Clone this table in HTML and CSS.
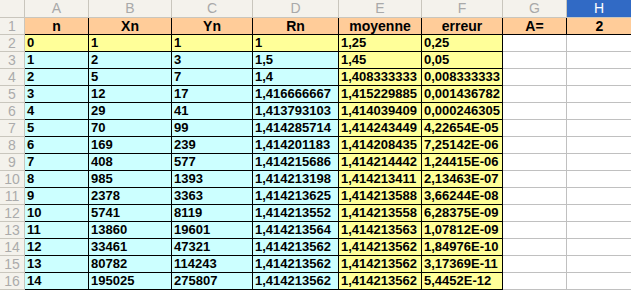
FILE: index.html
```html
<!DOCTYPE html>
<html>
<head>
<meta charset="utf-8">
<link rel="stylesheet" href="styles.css">
</head>
<body>
<div class="sheet">
  <div class="ch corner"></div>
  <div class="ch">A</div><div class="ch">B</div><div class="ch">C</div><div class="ch">D</div>
  <div class="ch">E</div><div class="ch">F</div><div class="ch">G</div><div class="ch sel">H</div>

  <div class="rh">1</div>
  <div class="c hd">n</div><div class="c hd">Xn</div><div class="c hd">Yn</div><div class="c hd">Rn</div>
  <div class="c hd">moyenne</div><div class="c hd">erreur</div><div class="c hd">A=</div><div class="c hd last">2</div>

  <div class="rh">2</div>
  <div class="c y">0</div><div class="c y">1</div><div class="c y">1</div><div class="c y">1</div>
  <div class="c y">1,25</div><div class="c y">0,25</div><div class="c w"></div><div class="c w"></div>

  <div class="rh">3</div>
  <div class="c b">1</div><div class="c b">2</div><div class="c b">3</div><div class="c b">1,5</div>
  <div class="c y">1,45</div><div class="c y">0,05</div><div class="c w"></div><div class="c w"></div>

  <div class="rh">4</div>
  <div class="c b">2</div><div class="c b">5</div><div class="c b">7</div><div class="c b">1,4</div>
  <div class="c y">1,408333333</div><div class="c y">0,008333333</div><div class="c w"></div><div class="c w"></div>

  <div class="rh">5</div>
  <div class="c b">3</div><div class="c b">12</div><div class="c b">17</div><div class="c b">1,416666667</div>
  <div class="c y">1,415229885</div><div class="c y">0,001436782</div><div class="c w"></div><div class="c w"></div>

  <div class="rh">6</div>
  <div class="c b">4</div><div class="c b">29</div><div class="c b">41</div><div class="c b">1,413793103</div>
  <div class="c y">1,414039409</div><div class="c y">0,000246305</div><div class="c w"></div><div class="c w"></div>

  <div class="rh">7</div>
  <div class="c b">5</div><div class="c b">70</div><div class="c b">99</div><div class="c b">1,414285714</div>
  <div class="c y">1,414243449</div><div class="c y">4,22654E-05</div><div class="c w"></div><div class="c w"></div>

  <div class="rh">8</div>
  <div class="c b">6</div><div class="c b">169</div><div class="c b">239</div><div class="c b">1,414201183</div>
  <div class="c y">1,414208435</div><div class="c y">7,25142E-06</div><div class="c w"></div><div class="c w"></div>

  <div class="rh">9</div>
  <div class="c b">7</div><div class="c b">408</div><div class="c b">577</div><div class="c b">1,414215686</div>
  <div class="c y">1,414214442</div><div class="c y">1,24415E-06</div><div class="c w"></div><div class="c w"></div>

  <div class="rh">10</div>
  <div class="c b">8</div><div class="c b">985</div><div class="c b">1393</div><div class="c b">1,414213198</div>
  <div class="c y">1,414213411</div><div class="c y">2,13463E-07</div><div class="c w"></div><div class="c w"></div>

  <div class="rh">11</div>
  <div class="c b">9</div><div class="c b">2378</div><div class="c b">3363</div><div class="c b">1,414213625</div>
  <div class="c y">1,414213588</div><div class="c y">3,66244E-08</div><div class="c w"></div><div class="c w"></div>

  <div class="rh">12</div>
  <div class="c b">10</div><div class="c b">5741</div><div class="c b">8119</div><div class="c b">1,414213552</div>
  <div class="c y">1,414213558</div><div class="c y">6,28375E-09</div><div class="c w"></div><div class="c w"></div>

  <div class="rh">13</div>
  <div class="c b">11</div><div class="c b">13860</div><div class="c b">19601</div><div class="c b">1,414213564</div>
  <div class="c y">1,414213563</div><div class="c y">1,07812E-09</div><div class="c w"></div><div class="c w"></div>

  <div class="rh">14</div>
  <div class="c b">12</div><div class="c b">33461</div><div class="c b">47321</div><div class="c b">1,414213562</div>
  <div class="c y">1,414213562</div><div class="c y">1,84976E-10</div><div class="c w"></div><div class="c w"></div>

  <div class="rh">15</div>
  <div class="c b">13</div><div class="c b">80782</div><div class="c b">114243</div><div class="c b">1,414213562</div>
  <div class="c y">1,414213562</div><div class="c y">3,17369E-11</div><div class="c w"></div><div class="c w"></div>

  <div class="rh">16</div>
  <div class="c b">14</div><div class="c b">195025</div><div class="c b">275807</div><div class="c b">1,414213562</div>
  <div class="c y">1,414213562</div><div class="c y">5,4452E-12</div><div class="c w"></div><div class="c w"></div>
</div>
</body>
</html>
```

FILE: styles.css
```css
html, body {
  margin: 0;
  padding: 0;
  background: #ffffff;
  overflow: hidden;
}

.sheet {
  display: grid;
  grid-template-columns: 25px 64px 83px 81px 86px 83px 81px 64px 65px;
  grid-template-rows: 18px repeat(16, 17px);
  width: 632px;
  font-family: "Liberation Sans", Arial, sans-serif;
}

.sheet > div {
  box-sizing: border-box;
  white-space: nowrap;
  overflow: hidden;
}

.ch {
  background: #f4f2ec;
  border-right: 1px solid #c9c6bd;
  border-bottom: 1px solid #c9c6bd;
  color: #a9a9a9;
  font-size: 14px;
  line-height: 17px;
  text-align: center;
}

.ch.sel {
  background: #316ac5;
  color: #ffffff;
  border-right-color: #316ac5;
}

.rh {
  background: #f4f2ec;
  border-right: 1px solid #c9c6bd;
  border-bottom: 1px solid #c9c6bd;
  color: #ababab;
  font-size: 14px;
  line-height: 16px;
  text-align: center;
}

.c {
  border-right: 1px solid #000000;
  border-bottom: 1px solid #000000;
  font-size: 13px;
  font-weight: bold;
  line-height: 16px;
  padding-left: 2px;
  color: #000000;
}

.hd {
  background: #ffcc99;
  font-size: 14px;
  text-align: center;
  padding-left: 0;
}

.hd.last {
  border-right: none;
}

.y {
  background: #ffff99;
}

.b {
  background: #ccffff;
}

.w {
  background: #ffffff;
  border-right: 1px solid #c0c0c0;
  border-bottom: 1px solid #c0c0c0;
}
```
